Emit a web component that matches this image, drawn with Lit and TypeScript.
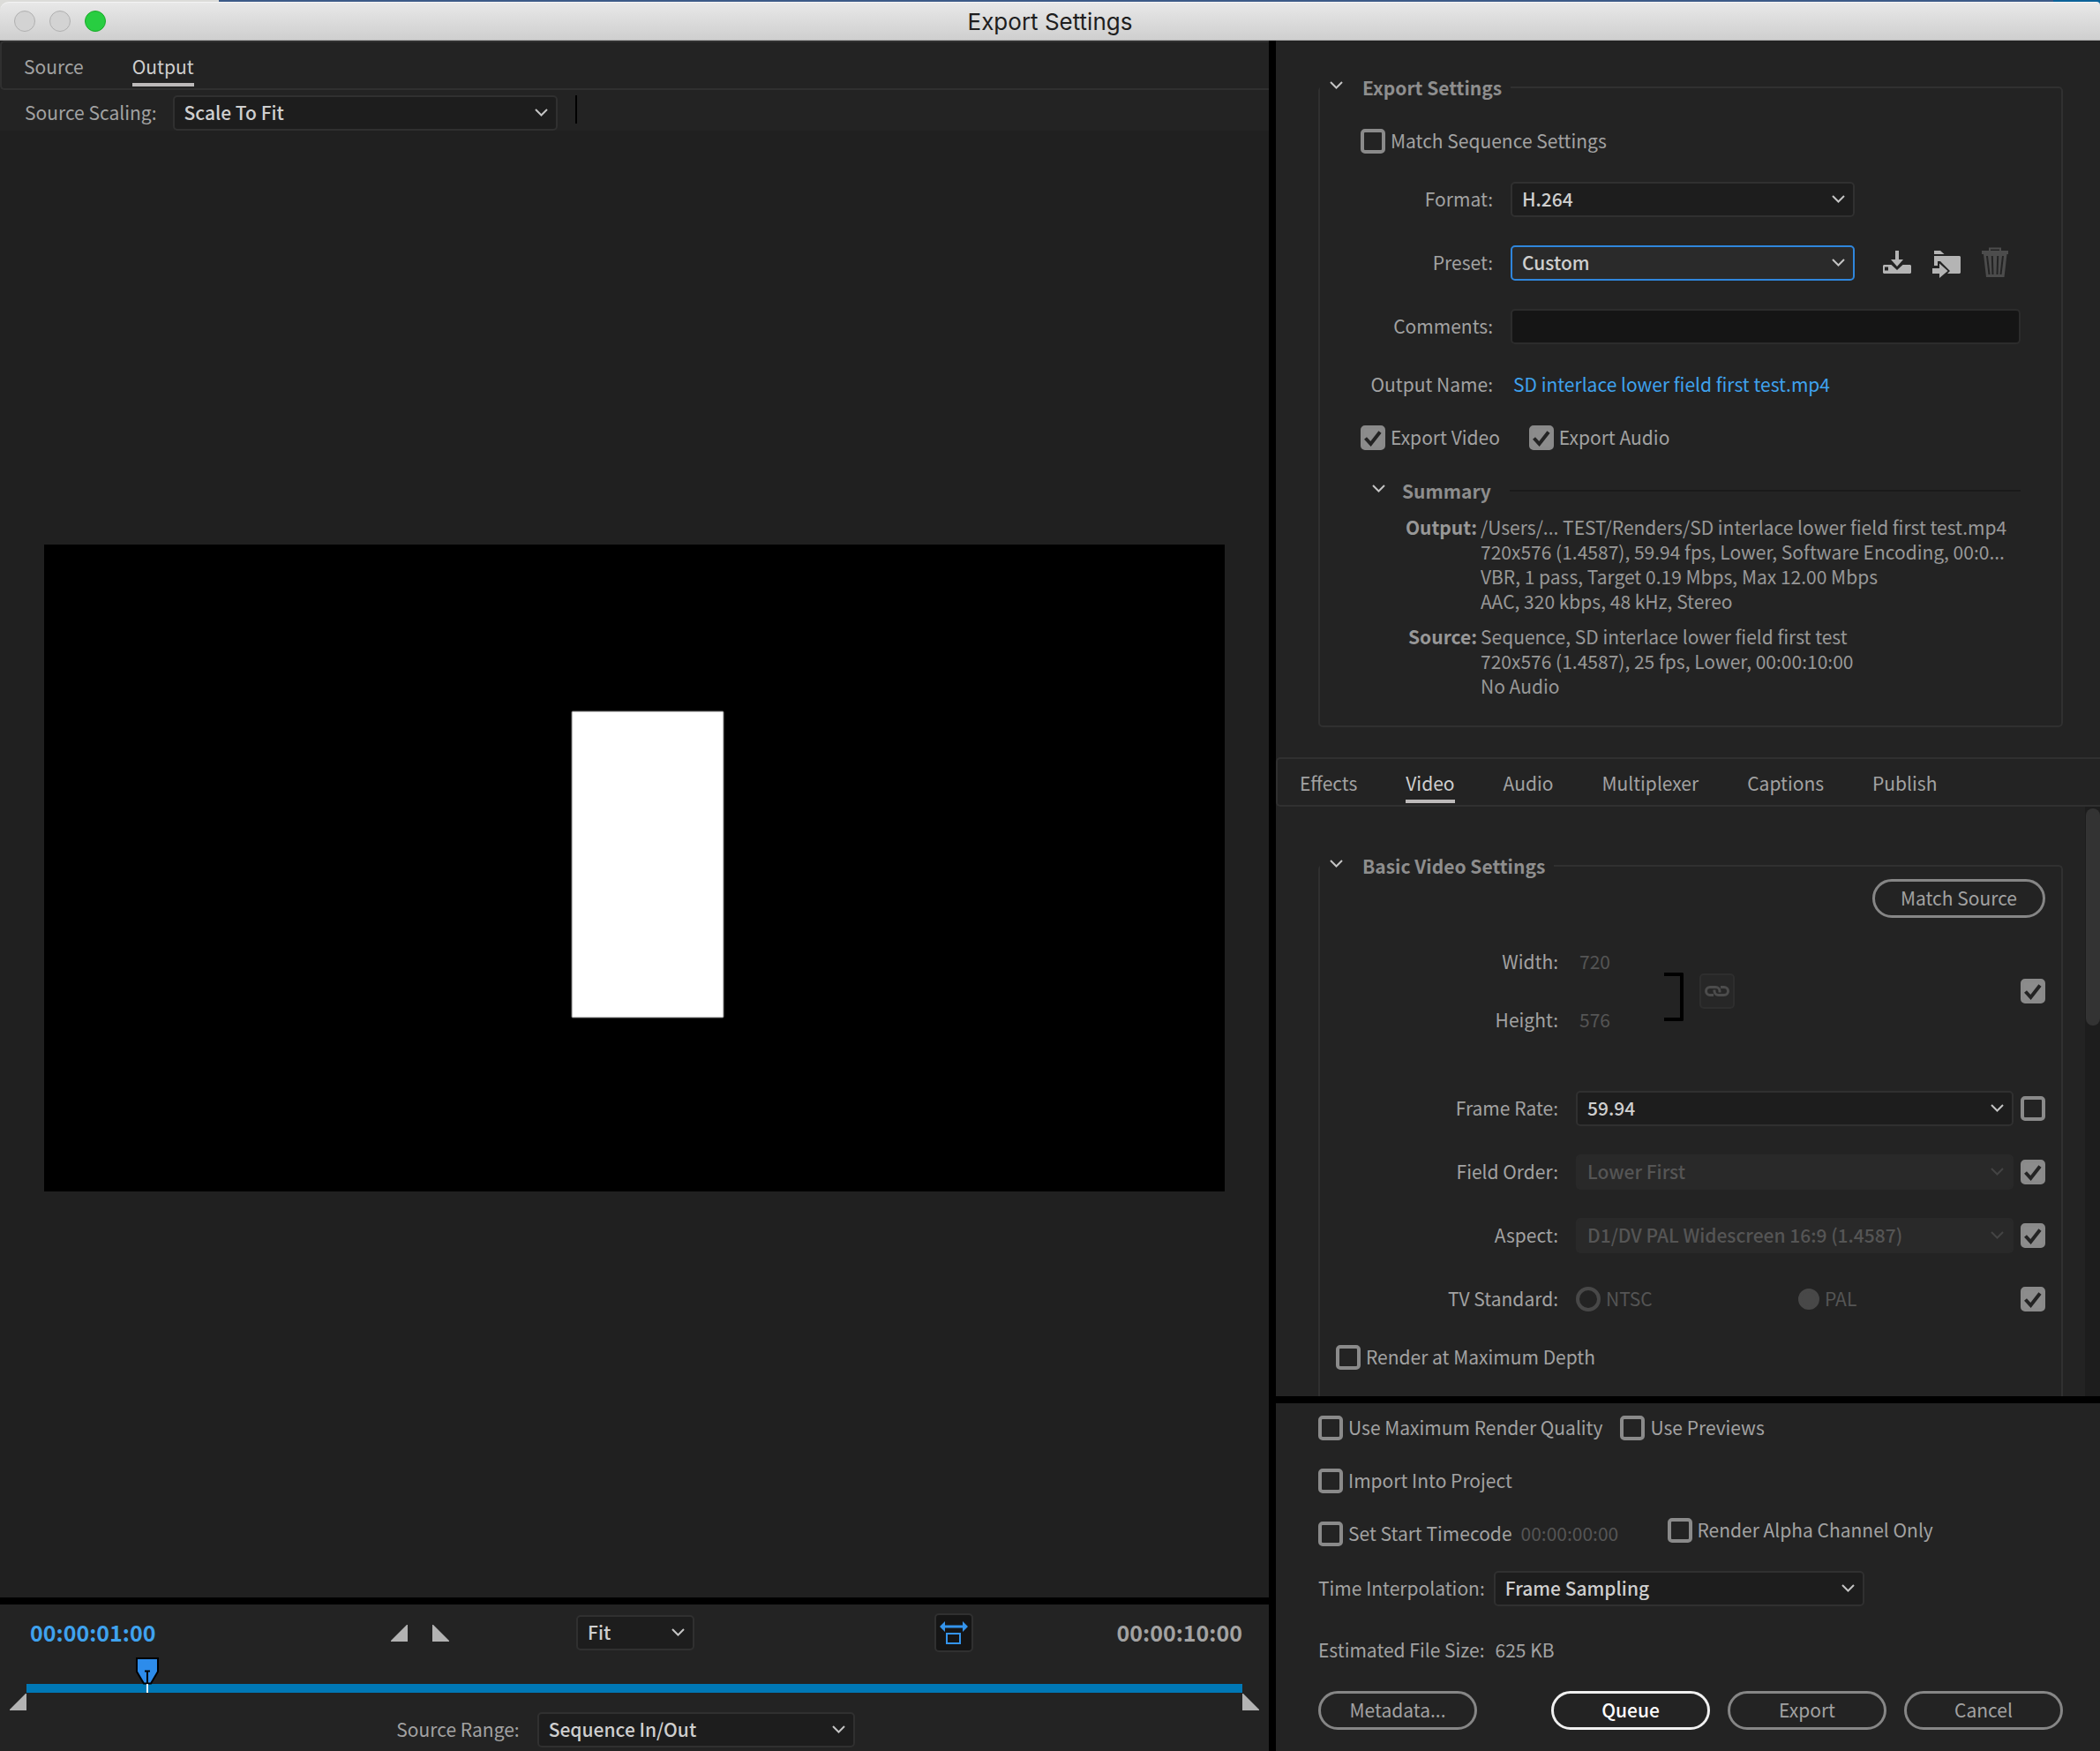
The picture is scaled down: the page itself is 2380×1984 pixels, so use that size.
import { LitElement, html, svg, css, nothing } from "lit";
import { customElement, property } from "lit/decorators.js";
import { classMap } from "lit/directives/class-map.js";

const chevron = html`<svg class="chevron" width="15" height="9" viewBox="0 0 15 9" aria-hidden="true">
  <path d="M1 1l6.5 6.5L14 1" fill="none" stroke="currentColor" stroke-width="2" />
</svg>`;

const base = css`
  *, *::before, *::after { box-sizing: border-box; }
  :host {
    --text: #a2a2a2;
    --bright: #cfcfcf;
    --dim: #555;
    --panel: #232323;
    --line: #303030;
    --accent: #3fa2ee;
    color: var(--text);
    font-family: "Noto Sans CJK SC", "Noto Sans", sans-serif;
    font-size: 21px;
    line-height: 28px;
  }
  button, input, select { font: inherit; color: inherit; margin: 0; }
  button { background: none; border: 0; padding: 0; }
  svg { display: block; flex: none; }
`;

@customElement("drop-down")
class DropDown extends LitElement {
  @property() label = "";
  @property() value = "";
  @property({ type: Boolean }) disabled = false;
  @property({ type: Boolean }) active = false;

  static styles = [base, css`
    :host { display: grid; min-width: 0; }
    .select, .chevron { grid-area: 1 / 1; }
    .select {
      appearance: none;
      width: 100%;
      height: 40px;
      padding: 0 36px 2px 11px;
      border: 2px solid var(--line);
      border-radius: 5px;
      background: #1d1d1d;
      color: var(--bright);
      font-weight: 500;
      outline: none;
    }
    .active { border-color: #2f86dc; background: #2a2a2a; }
    .select:disabled { border-color: #292929; background: #292929; color: var(--dim); opacity: 1; }
    .chevron { align-self: center; justify-self: end; margin: 0 11px 2px 0; color: #c4c4c4; pointer-events: none; }
    .select:disabled + .chevron { color: #444; }
  `];

  render() {
    return html`<select class=${classMap({ select: true, active: this.active })}
        aria-label=${this.label} ?disabled=${this.disabled}>
        <option selected>${this.value}</option>
      </select>${chevron}`;
  }
}

@customElement("check-box")
class CheckBox extends LitElement {
  @property() text = "";
  @property() label = "";
  @property({ type: Boolean }) checked = false;

  static styles = [base, css`
    :host { display: block; flex: none; }
    .wrap { display: flex; align-items: center; gap: 6px; height: 28px; white-space: nowrap; }
    .cell { display: grid; }
    .caption { padding-bottom: 2px; }
    .box, .tick { grid-area: 1 / 1; }
    .box {
      appearance: none;
      width: 28px;
      height: 28px;
      border: 4px solid #8a8a8a;
      border-radius: 5px;
    }
    .box:checked { background: #8c8c8c; }
    .tick { display: none; pointer-events: none; }
    .box:checked + .tick { display: block; }
  `];

  render() {
    return html`<label class="wrap">
      <span class="cell">
        <input class="box" type="checkbox" .checked=${this.checked} aria-label=${this.text || this.label} />
        <svg class="tick" width="28" height="28" viewBox="0 0 28 28" aria-hidden="true">
          <path d="M5.500 14.500l6 6.500L22 7.500" fill="none" stroke="#232323" stroke-width="4" />
        </svg>
      </span>
      ${this.text ? html`<span class="caption">${this.text}</span>` : nothing}
    </label>`;
  }
}

const icons = {
  save: svg`<path fill="#b4b4b4" d="M14 4h4v10h5l-7 8-7-8h5z" />
    <path fill="#b4b4b4" fill-rule="evenodd" d="M1 20h8.500l6.500 6 6.500-6H31l1 1v8l-1 1H1l-1-1v-8zM2 22.500v4h4v-4z" />`,
  load: svg`<path fill="#b4b4b4" d="M2 4h7l4.500 4H2zM2 10h29l1 1v18l-1 1H2z" />
    <path fill="#232323" d="M0 21h6v-5h3l11 11-11 11H6v-4H0z" />
    <path fill="#b4b4b4" d="M0 24h8v-5.500l9.500 8.500L8 35v-5H0z" />`,
  trash: svg`<path fill="none" stroke="#4c4c4c" stroke-width="2" d="M9 5V1.500h12V5" />
    <path fill="#4c4c4c" d="M0 4h30v4h-1.500L25.500 34H5L2 8H0z" />
    <path fill="none" stroke="#232323" stroke-width="2" d="M6 10l2.500 21M11.800 10l.7 21M18.200 10l-.7 21M24 10l-2.500 21" />`,
};

const triangleIn = html`<svg width="19" height="19" viewBox="0 0 19 19" aria-hidden="true"><path fill="#b3b3b3" d="M18 0h1v19H0v-1z" /></svg>`;
const triangleOut = html`<svg width="19" height="19" viewBox="0 0 19 19" aria-hidden="true"><path fill="#b3b3b3" d="M1 0H0v19h19v-1z" /></svg>`;

@customElement("tab-strip")
class TabStrip extends LitElement {
  @property({ attribute: false }) tabs: string[] = [];
  @property() current = "";

  static styles = [base, css`
    :host { display: block; flex: none; }
    .strip {
      display: flex;
      gap: 55px;
      height: 56px;
      padding: 0 25px;
      border: 2px solid var(--line);
      border-right: 0;
      border-radius: 5px 0 0 5px;
    }
    .tab { padding: 13px 0 5px; border-bottom: 4px solid transparent; height: 50px; }
    .on { color: var(--bright); border-color: #bdbaba; }
  `];

  render() {
    return html`<div class="strip" role="tablist">
      ${this.tabs.map((t) => html`<button role="tab" aria-selected=${t === this.current}
        class=${classMap({ tab: true, on: t === this.current })}>${t}</button>`)}
    </div>`;
  }
}

@customElement("preview-pane")
class PreviewPane extends LitElement {
  static styles = [base, css`
    :host { display: flex; flex-direction: column; gap: 8px; min-width: 0; background: #000; }
    .view { flex: 1; display: flex; flex-direction: column; min-height: 0; background: #202020; }
    .head { background: var(--panel); }
    .scaling { display: flex; align-items: center; padding: 6px 28px 0; }
    .scaling .pick { width: 436px; margin: 0 20px 0 18px; }
    .caption { padding-bottom: 2px; }
    .rule { width: 2px; height: 32px; background: #000; align-self: flex-start; }
    .stage { flex: 1; display: grid; align-content: center; padding: 8px 50px 0; min-height: 0; }
    .frame { width: 100%; height: auto; }
    .transport { background: var(--panel); padding: 10px 11px 4px; }
    .bar { display: grid; grid-template-columns: 409fr 210fr 406fr 349fr; align-items: center; height: 44px; padding: 0 19px 0 23px; }
    .code { font-size: 25px; font-weight: 700; padding-bottom: 2px; }
    .now { color: var(--accent); }
    .end { text-align: right; }
    .steps { display: flex; gap: 28px; }
    .fit { width: 134px; }
    .last { display: flex; align-items: center; justify-content: space-between; }
    .snap { width: 44px; height: 44px; border: 2px solid var(--line); border-radius: 5px; background: #151515; display: grid; place-items: center; }
    .track { display: grid; grid-template-columns: 19px 1fr 19px; grid-template-rows: 30px 10px; margin-top: 6px; }
    .range { grid-area: 2 / 2; background: #0078b6; }
    .slider { grid-area: 1 / 2 / 3 / 3; display: flex; }
    .handles { display: flex; justify-content: space-between; padding-top: 1px; height: 22px; }
    .source { display: flex; align-items: center; justify-content: center; gap: 20px; padding-right: 20px; }
    .source .pick { width: 360px; }
  `];

  render() {
    return html`
      <div class="view">
        <div class="head">
          <tab-strip .tabs=${["Source", "Output"]} current="Output"></tab-strip>
          <div class="scaling">
            <span class="caption">Source Scaling:</span>
            <drop-down class="pick" label="Source Scaling" value="Scale To Fit"></drop-down>
            <span class="rule"></span>
          </div>
        </div>
        <div class="stage">
          <svg class="frame" viewBox="0 0 1338 733" role="img" aria-label="Video frame">
            <rect width="1338" height="733" fill="#000" />
            <rect x="598" y="189" width="172" height="347" rx="1" fill="#fff" stroke="#777" />
          </svg>
        </div>
      </div>
      <div class="transport">
        <div class="bar">
          <span class="code now">00:00:01:00</span>
          <div class="steps">
            <button aria-label="Set in point">${triangleIn}</button>
            <button aria-label="Set out point">${triangleOut}</button>
          </div>
          <drop-down class="fit" label="Zoom level" value="Fit"></drop-down>
          <div class="last">
            <button class="snap" aria-label="Aspect ratio correction">
              <svg width="32" height="26" viewBox="0 0 32 26">
                <path fill="#3494ec" d="M0 6l6-6v4.500h20V0l6 6-6 6V7.500H6V12z" />
                <rect x="8" y="14" width="15" height="11" fill="none" stroke="#3494ec" stroke-width="2" />
              </svg>
            </button>
            <span class="code end">00:00:10:00</span>
          </div>
        </div>
        <div class="track">
          <div class="range"></div>
          <svg class="slider" width="100%" height="40" aria-label="Playhead">
            <svg x="9.940%" y="0" width="28" height="40" overflow="visible">
              <path d="M-12 1h24v15L4 29.500h-8l-8-13.500z" fill="#2d8ceb" stroke="#000" stroke-width="2" />
              <path d="M-3 15.500h6M0 15v15" stroke="#000" stroke-width="2" />
              <path d="M0 30v10" stroke="#fff" stroke-width="2" />
            </svg>
          </svg>
        </div>
        <div class="handles">${triangleIn}${triangleOut}</div>
        <div class="source">
          <span class="caption">Source Range:</span>
          <drop-down class="pick" label="Source Range" value="Sequence In/Out"></drop-down>
        </div>
      </div>`;
  }
}

@customElement("settings-pane")
class SettingsPane extends LitElement {
  static styles = [base, css`
    :host { display: flex; flex-direction: column; gap: 8px; min-width: 0; min-height: 0; background: #000; }
    .upper { flex: 1; display: flex; flex-direction: column; min-height: 0; background: var(--panel); }
    .general { padding: 39px 42px 34px 48px; }
    .group { margin: 0; padding: 0; border: 2px solid var(--line); border-radius: 5px; min-width: 0; }
    .legend { padding: 0 10px 0 11px; margin-left: 0; }
    .toggle { display: flex; align-items: center; gap: 22px; font-weight: 700; color: #8e8e8e; }
    .toggle .chevron { color: #c4c4c4; margin-bottom: 6px; }
    .stack { display: flex; flex-direction: column; gap: 32px; }
    .main { padding: 33px 46px 30px; }
    .field { display: grid; grid-template-columns: 170px minmax(0, 1fr) 188px; align-items: center; min-height: 28px; }
    .name { text-align: right; padding: 0 20px 2px 0; white-space: nowrap; line-height: 26px; }
    .wide { grid-column: 2 / 4; }
    .comments { height: 40px; width: 100%; padding: 0 11px; border: 2px solid #2c2c2c; border-radius: 5px; background: #151515; }
    .link { color: var(--accent); text-decoration: none; padding: 0 0 2px 3px; line-height: 26px; }
    .tools { display: flex; gap: 24px; padding-left: 32px; }
    .row { display: flex; align-items: center; }
    .media { gap: 33px; }
    .summary { display: flex; flex-direction: column; gap: 13px; }
    .sumhead { display: flex; align-items: center; gap: 21px; padding-left: 13px; }
    .sumhead .toggle { gap: 19px; }
    .hr { flex: 1; height: 2px; background: #1a1a1a; }
    .facts { display: grid; grid-template-columns: 132px minmax(0, 1fr); gap: 12px 4px; margin: 0 0 1px; color: #989898; }
    .facts dt { text-align: right; font-weight: 700; }
    .facts dd { margin: 0; }
    .line { display: block; white-space: nowrap; }
    .scroller { flex: 1; display: grid; grid-template-columns: minmax(0, 1fr) 17px; min-height: 0; overflow: hidden; }
    .content { padding: 53px 25px 0 48px; min-height: 0; display: grid; }
    .open { border-bottom: 0; border-radius: 5px 5px 0 0; }
    .video { padding: 1px 18px 0; }
    .gutter { background: #1d1d1d; padding: 2px 0 0 1px; }
    .thumb { height: 246px; border-radius: 8px; background: #333; }
    .pill {
      height: 44px;
      min-width: 180px;
      border: 3px solid #868686;
      border-radius: 22px;
      padding: 0 29px 2px;
    }
    .primary { border-color: #f0f0f0; color: #fff; font-weight: 500; }
    .match { align-self: flex-end; }
    .size { display: flex; align-items: center; padding-top: 4px; margin-bottom: 34px; }
    .pair { display: grid; grid-template-columns: 272px 100px; gap: 38px 0; }
    .num { border: 0; background: none; padding: 0 0 2px 4px; width: 100%; height: 28px; color: var(--dim); }
    .bracket { width: 22px; height: 55px; border: 4px solid #000; border-left: 0; border-radius: 0 2px 2px 0; margin: 12px 18px 0 0; }
    .chain { width: 40px; height: 40px; border: 2px solid #2e2e2e; border-radius: 5px; background: #272727; display: grid; place-items: center; margin-right: auto; }
    .opt { display: grid; grid-template-columns: 272px minmax(0, 1fr) auto; align-items: center; height: 40px; }
    .opt .pick { margin-right: 8px; }
    .radios { display: grid; grid-template-columns: 1fr 1fr; color: var(--dim); }
    .radio { display: flex; align-items: center; gap: 6px; }
    .dot { appearance: none; width: 28px; height: 28px; border: 4px solid #484848; border-radius: 50%; }
    .dot:checked { width: 24px; height: 24px; background: #484848; }
    .footer { background: var(--panel); padding: 14px 42px 24px 48px; }
    .alpha { display: flex; height: 32px; margin-top: -4px; }
    .start { display: flex; align-self: flex-end; align-items: center; gap: 10px; margin-right: 48px; }
    .code { width: 118px; border: 0; background: none; padding: 0 0 2px; height: 28px; color: var(--dim); }
    .quality { gap: 20px; }
    .interp { gap: 10px; margin-top: -4px; }
    .interp .pick { width: 420px; }
    .caption { padding-bottom: 2px; }
    .estimate { gap: 12px; margin-top: 4px; height: 28px; }
    .actions { display: flex; gap: 20px; }
    .push { margin-right: auto; }
  `];

  private option(name: string, value: string, disabled: boolean, checked: boolean) {
    return html`<div class="opt">
      <span class="name">${name}:</span>
      <drop-down class="pick" label=${name} value=${value} ?disabled=${disabled}></drop-down>
      <check-box label="Match source ${name}" ?checked=${checked}></check-box>
    </div>`;
  }

  private tool(label: string, icon: unknown, disabled = false) {
    return html`<button aria-label=${label} ?disabled=${disabled}>
      <svg width="32" height="36" viewBox="0 0 32 36">${icon}</svg>
    </button>`;
  }

  render() {
    return html`
      <div class="upper">
        <div class="general">
          <fieldset class="group">
            <legend class="legend"><button class="toggle">${chevron}<span>Export Settings</span></button></legend>
            <div class="stack main">
              <check-box text="Match Sequence Settings"></check-box>
              <div class="field">
                <span class="name">Format:</span>
                <drop-down label="Format" value="H.264"></drop-down>
              </div>
              <div class="field">
                <span class="name">Preset:</span>
                <drop-down label="Preset" value="Custom" active></drop-down>
                <div class="tools">
                  ${this.tool("Save preset", icons.save)}
                  ${this.tool("Import preset", icons.load)}
                  ${this.tool("Delete preset", icons.trash, true)}
                </div>
              </div>
              <div class="field">
                <label class="name" for="comments">Comments:</label>
                <input class="comments wide" id="comments" type="text" />
              </div>
              <div class="field">
                <span class="name">Output Name:</span>
                <a class="link wide" href="#output">SD interlace lower field first test.mp4</a>
              </div>
              <div class="row media">
                <check-box text="Export Video" checked></check-box>
                <check-box text="Export Audio" checked></check-box>
              </div>
              <div class="summary">
                <div class="sumhead">
                  <button class="toggle">${chevron}<span>Summary</span></button>
                  <span class="hr"></span>
                </div>
                <dl class="facts">
                  <dt>Output:</dt>
                  <dd>
                    <span class="line">/Users/... TEST/Renders/SD interlace lower field first test.mp4</span>
                    <span class="line">720x576 (1.4587), 59.94 fps, Lower, Software Encoding, 00:0...</span>
                    <span class="line">VBR, 1 pass, Target 0.19 Mbps, Max 12.00 Mbps</span>
                    <span class="line">AAC, 320 kbps, 48 kHz, Stereo</span>
                  </dd>
                  <dt>Source:</dt>
                  <dd>
                    <span class="line">Sequence, SD interlace lower field first test</span>
                    <span class="line">720x576 (1.4587), 25 fps, Lower, 00:00:10:00</span>
                    <span class="line">No Audio</span>
                  </dd>
                </dl>
              </div>
            </div>
          </fieldset>
        </div>
        <tab-strip .tabs=${["Effects", "Video", "Audio", "Multiplexer", "Captions", "Publish"]} current="Video"></tab-strip>
        <div class="scroller">
          <div class="content">
            <fieldset class="group open">
              <legend class="legend"><button class="toggle">${chevron}<span>Basic Video Settings</span></button></legend>
              <div class="stack video">
                <button class="pill match">Match Source</button>
                <div class="size">
                  <div class="pair">
                    <label class="name" for="w">Width:</label><input class="num" id="w" value="720" disabled />
                    <label class="name" for="h">Height:</label><input class="num" id="h" value="576" disabled />
                  </div>
                  <span class="bracket"></span>
                  <button class="chain" aria-label="Link width and height" disabled>
                    <svg width="28" height="12" viewBox="0 0 28 12" fill="none" stroke="#4c4c4c" stroke-width="3">
                      <path d="M10 10.500H6a4.500 4.500 0 0 1 0-9h6.500A4.500 4.500 0 0 1 17 6v1.500" />
                      <path d="M18 1.500h4a4.500 4.500 0 0 1 0 9h-6.500A4.500 4.500 0 0 1 11 6V4.500" />
                    </svg>
                  </button>
                  <check-box label="Match source size" checked></check-box>
                </div>
                ${this.option("Frame Rate", "59.94", false, false)}
                ${this.option("Field Order", "Lower First", true, true)}
                ${this.option("Aspect", "D1/DV PAL Widescreen 16:9 (1.4587)", true, true)}
                <div class="opt">
                  <span class="name">TV Standard:</span>
                  <div class="radios">
                    <label class="radio"><input class="dot" type="radio" name="tv" disabled /><span class="caption">NTSC</span></label>
                    <label class="radio"><input class="dot" type="radio" name="tv" checked disabled /><span class="caption">PAL</span></label>
                  </div>
                  <check-box label="Match source TV Standard" checked></check-box>
                </div>
                <check-box text="Render at Maximum Depth"></check-box>
              </div>
            </fieldset>
          </div>
          <div class="gutter"><div class="thumb"></div></div>
        </div>
      </div>
      <div class="footer stack">
        <div class="row quality">
          <check-box text="Use Maximum Render Quality"></check-box>
          <check-box text="Use Previews"></check-box>
        </div>
        <check-box text="Import Into Project"></check-box>
        <div class="alpha">
          <div class="start">
            <check-box text="Set Start Timecode"></check-box>
            <input class="code" aria-label="Start timecode" value="00:00:00:00" disabled />
          </div>
          <check-box text="Render Alpha Channel Only"></check-box>
        </div>
        <div class="row interp">
          <span class="caption">Time Interpolation:</span>
          <drop-down class="pick" label="Time Interpolation" value="Frame Sampling"></drop-down>
        </div>
        <div class="row estimate"><span class="caption">Estimated File Size:</span><span class="caption">625 KB</span></div>
        <div class="actions">
          <button class="pill push">Metadata...</button>
          <button class="pill primary">Queue</button>
          <button class="pill">Export</button>
          <button class="pill">Cancel</button>
        </div>
      </div>`;
  }
}

@customElement("app-root")
class AppRoot extends LitElement {
  static styles = [base, css`
    :host { display: grid; grid-template-rows: auto minmax(0, 1fr); height: 100vh; min-height: 1500px; background: #000; }
    .desktop { background: linear-gradient(90deg, #dcdcd9 0 248px, #3c5a87 248px 2327px, #0b6299 2327px); padding-top: 2px; }
    .titlebar {
      display: grid;
      grid-template-columns: 1fr auto 1fr;
      align-items: center;
      height: 44px;
      padding: 0 16px;
      border-top: 1px solid #f4f4f4;
      border-bottom: 1px solid #ababab;
      border-radius: 10px 4px 0 0;
      background: linear-gradient(#e8e8e8, #cfcfcf);
    }
    .lights { display: flex; gap: 16px; }
    .light { width: 24px; height: 24px; border: 1px solid #b0b0b0; border-radius: 50%; background: #d3d3d3; }
    .zoom { background: #28cd41; border-color: #1aab29; }
    .title { margin: 0; padding-top: 2px; font-family: Inter, sans-serif; font-size: 26px; font-weight: 400; line-height: 28px; color: #1e1e1e; }
    .body { display: grid; grid-template-columns: minmax(0, 1438fr) minmax(0, 934fr); gap: 8px; min-height: 0; }
  `];

  render() {
    return html`
      <div class="desktop">
        <header class="titlebar">
          <div class="lights">
            <button class="light" aria-label="Close"></button>
            <button class="light" aria-label="Minimize"></button>
            <button class="light zoom" aria-label="Zoom"></button>
          </div>
          <h1 class="title">Export Settings</h1>
        </header>
      </div>
      <main class="body">
        <preview-pane></preview-pane>
        <settings-pane></settings-pane>
      </main>`;
  }
}
